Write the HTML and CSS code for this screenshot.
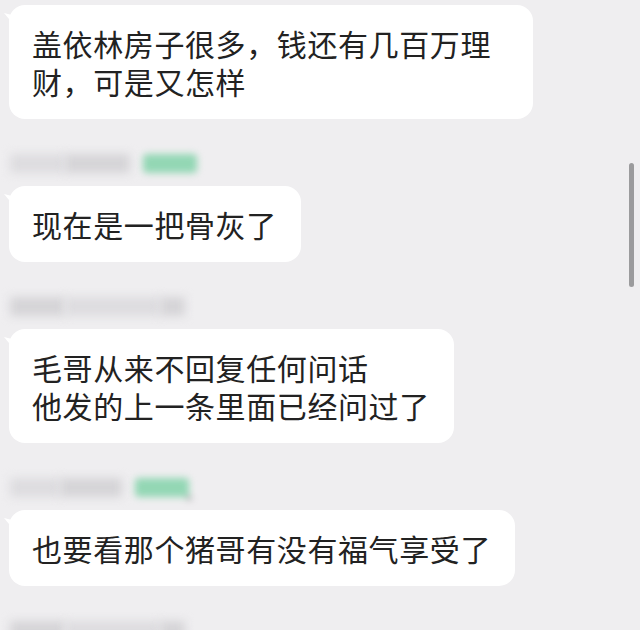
FILE: index.html
```html
<!DOCTYPE html>
<html lang="zh-CN">

<head>
    <meta charset="UTF-8">
    <meta name="viewport" content="width=device-width, initial-scale=1.0">
    <title>群聊</title>
    <link rel="stylesheet" href="styles.css">
</head>

<body>
    <div class="chat">
        <!-- first message, sender row scrolled off the top -->
        <div class="msg first">
            <div class="bubble">盖依林房子很多，钱还有几百万理财，可是又怎样</div>
        </div>

        <div class="msg">
            <div class="sender">
                <span class="nick nick-light w55"></span><span class="nick w65"></span>
                <span class="tag"></span>
            </div>
            <div class="bubble">现在是一把骨灰了</div>
        </div>

        <div class="msg">
            <div class="sender">
                <span class="nick w55"></span><span class="nick nick-light w95"></span><span class="nick w25"></span>
            </div>
            <div class="bubble">毛哥从来不回复任何问话<br>他发的上一条里面已经问过了</div>
        </div>

        <div class="msg">
            <div class="sender">
                <span class="nick nick-light w50"></span><span class="nick w62"></span>
                <span class="tag"><i class="tick"></i></span>
            </div>
            <div class="bubble">也要看那个猪哥有没有福气享受了</div>
        </div>

        <div class="msg">
            <div class="sender">
                <span class="nick w55"></span><span class="nick nick-light w95"></span><span class="nick w25"></span>
            </div>
        </div>
    </div>

    <!-- overlay scrollbar -->
    <div class="scroll-thumb"></div>
</body>

</html>
```

FILE: styles.css
```css
/* General Styles */
body {
    margin: 0;
    padding: 0;
    background-color: #efeef0;
    font-family: "Noto Sans CJK SC", "Noto Sans", sans-serif;
    color: #222222;
    height: 630px;
    overflow: hidden;
    position: relative;
}

.chat {
    padding: 5px 0 0 9px;
    display: flex;
    flex-direction: column;
}

.msg {
    display: flex;
    flex-direction: column;
    align-items: flex-start;
}

/* sender row: nickname and group tag are blurred out */
.sender {
    height: 20px;
    margin: 34px 0 13px 1px;
    display: flex;
    align-items: center;
}

.nick {
    display: block;
    height: 19px;
    background-color: #d5d4d7;
    filter: blur(5px);
}

.nick-light {
    background-color: #dddcdf;
}

.w25 { width: 25px; }
.w50 { width: 50px; }
.w55 { width: 55px; }
.w62 { width: 62px; }
.w65 { width: 65px; }
.w95 { width: 95px; }

.tag {
    display: block;
    position: relative;
    width: 54px;
    height: 19px;
    margin-left: 13px;
    background-color: #93d7b4;
    border-radius: 4px;
    filter: blur(3.5px);
}

.tick {
    position: absolute;
    right: -2px;
    bottom: -2px;
    width: 4px;
    height: 2px;
    background-color: #444;
}

.bubble {
    position: relative;
    max-width: 524px;
    box-sizing: border-box;
    padding: 19px 24px 19px 23px;
    background-color: #ffffff;
    border-radius: 16px;
    font-size: 30px;
    line-height: 38px;
    letter-spacing: 0.6px;
}

/* little tail at the top left corner */
.bubble::before {
    content: "";
    position: absolute;
    left: -5px;
    top: 8px;
    width: 10px;
    height: 12px;
    background-color: #ffffff;
    clip-path: polygon(0 0, 100% 20%, 100% 100%);
}

.scroll-thumb {
    position: absolute;
    left: 629px;
    top: 163px;
    width: 5px;
    height: 124px;
    border-radius: 3px;
    background-color: #9b9b9d;
}
```
